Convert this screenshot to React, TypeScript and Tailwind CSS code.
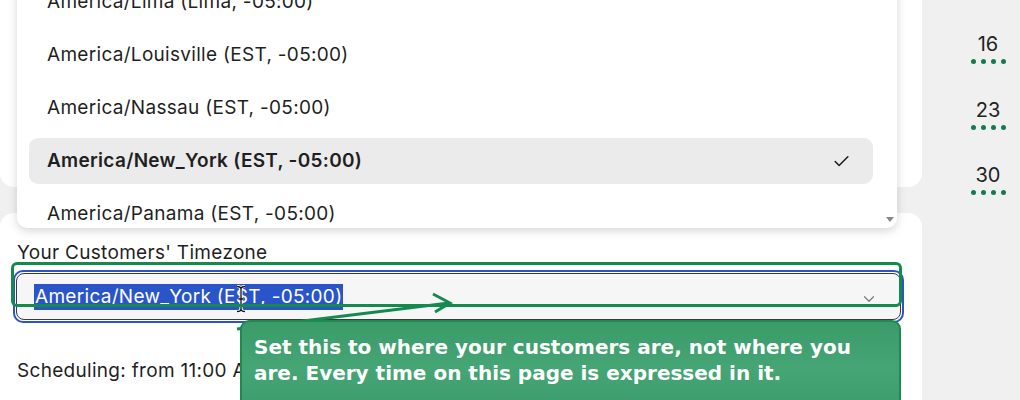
import { Check, ChevronDown } from "lucide-react";

const zones = [
  { label: "America/Lima (Lima, -05:00)" },
  { label: "America/Louisville (EST, -05:00)" },
  { label: "America/Nassau (EST, -05:00)" },
  { label: "America/New_York (EST, -05:00)", selected: true },
  { label: "America/Panama (EST, -05:00)" },
];

const days = ["9", "16", "23", "30"];

function Dots() {
  return (
    <div className="flex gap-[5px] mt-[4px]">
      {[0, 1, 2, 3].map((i) => (
        <span key={i} className="w-[5px] h-[5px] rounded-full bg-[#167a4e]" />
      ))}
    </div>
  );
}

export default function App() {
  return (
    <div className="relative w-[1020px] h-[400px] overflow-hidden bg-[#f0f0f0] flex font-['Inter',sans-serif] text-[#1f1f1f]">
      {/* Main column */}
      <div className="w-[922px] flex flex-col gap-[26px]">
        <div className="h-[187px] bg-white rounded-b-[14px]" />
        <div className="flex-1 bg-white rounded-t-[14px] px-[17px] pt-[28px]">
          <p className="text-[19px] leading-[24px] tracking-[0.3px]">Your Customers' Timezone</p>
          <div className="mt-[5px] ml-[-4px] w-[891px] h-[53px] rounded-[10px] border-[2px] border-[#2a55c9] p-[1px]">
            <div className="h-full rounded-[8px] border-[1.5px] border-[#3a3a3a] bg-[#f6f6f6] flex items-center pl-[17px] pr-[22px]">
              <span className="bg-[#2a55c9] text-white text-[19px] leading-[26px] tracking-[0.3px] px-[1px]">
                America/New_York (EST, -05:00)
              </span>
              <ChevronDown className="ml-auto w-[18px] h-[18px] text-[#7a7a7a] mt-[4px]" strokeWidth={1.6} />
            </div>
          </div>
          <p className="mt-[36px] text-[19px] leading-[24px] tracking-[0.3px]">Scheduling: from 11:00 AM</p>
        </div>
      </div>

      {/* Calendar column */}
      <div className="flex-1 pl-[48px]">
        <div className="w-[36px] flex flex-col mt-[-43.5px]">
          {days.map((d) => (
            <div key={d} className="h-[65.5px] pt-[11px] flex flex-col items-center">
              <span className="text-[20px] leading-[22px] text-[#222]">{d}</span>
              <Dots />
            </div>
          ))}
        </div>
      </div>

      {/* Dropdown list */}
      <div className="absolute left-[17px] top-[-28px] w-[880px] h-[256px] bg-white rounded-b-[10px] shadow-[0_3px_10px_rgba(0,0,0,0.16)] overflow-hidden">
        <div className="flex flex-col gap-[7px] pt-[7px] pl-[12px] pr-[24px]">
          {zones.map((z) => (
            <div
              key={z.label}
              className={
                z.selected
                  ? "h-[46px] shrink-0 rounded-[9px] bg-[#ebebeb] flex items-center pl-[18px] pr-[22px] text-[19px] tracking-[0.3px] font-semibold"
                  : "h-[46px] shrink-0 flex items-center pl-[18px] text-[19px] tracking-[0.3px]"
              }
            >
              {z.label}
              {z.selected && <Check className="ml-auto w-[19px] h-[19px]" strokeWidth={2} />}
            </div>
          ))}
        </div>
        <div className="absolute right-[3px] bottom-[6px] w-0 h-0 border-l-[4px] border-r-[4px] border-t-[5px] border-l-transparent border-r-transparent border-t-[#888]" />
      </div>

      {/* Text cursor */}
      <svg className="absolute left-[236px] top-[285px]" width="10" height="28" viewBox="0 0 10 28">
        <path d="M1 1.5 Q5 1.5 5 4 Q5 1.5 9 1.5 M5 4 V24 M1 26.5 Q5 26.5 5 24 Q5 26.5 9 26.5 M2.5 14 H7.5" stroke="#ffffff" strokeWidth="3.2" fill="none" />
        <path d="M1 1.5 Q5 1.5 5 4 Q5 1.5 9 1.5 M5 4 V24 M1 26.5 Q5 26.5 5 24 Q5 26.5 9 26.5 M2.5 14 H7.5" stroke="#111" strokeWidth="1.3" fill="none" />
      </svg>

      {/* Highlight outline */}
      <div className="absolute left-[11px] top-[262px] w-[891px] h-[45px] rounded-[6px] border-[3px] border-[#148a4f]" />

      {/* Arrow */}
      <svg className="absolute left-0 top-0" width="1020" height="400" viewBox="0 0 1020 400">
        <path d="M237 329 L449 303" stroke="#148a4f" strokeWidth="3" fill="none" />
        <path d="M433 294 L450 303 L435 312" stroke="#148a4f" strokeWidth="3" fill="none" />
      </svg>

      {/* Callout */}
      <div className="absolute left-[240px] top-[320px] w-[661px] h-[96px] rounded-[9px] border-[2px] border-[#1c8a52] bg-gradient-to-b from-[#3a9a68] via-[#45a575] to-[#3b9b69] pl-[12px] pt-[12px] font-['DejaVu_Sans',sans-serif] font-bold text-white text-[20px] leading-[26px]">
        <p>Set this to where your customers are, not where you</p>
        <p>are. Every time on this page is expressed in it.</p>
      </div>
    </div>
  );
}
